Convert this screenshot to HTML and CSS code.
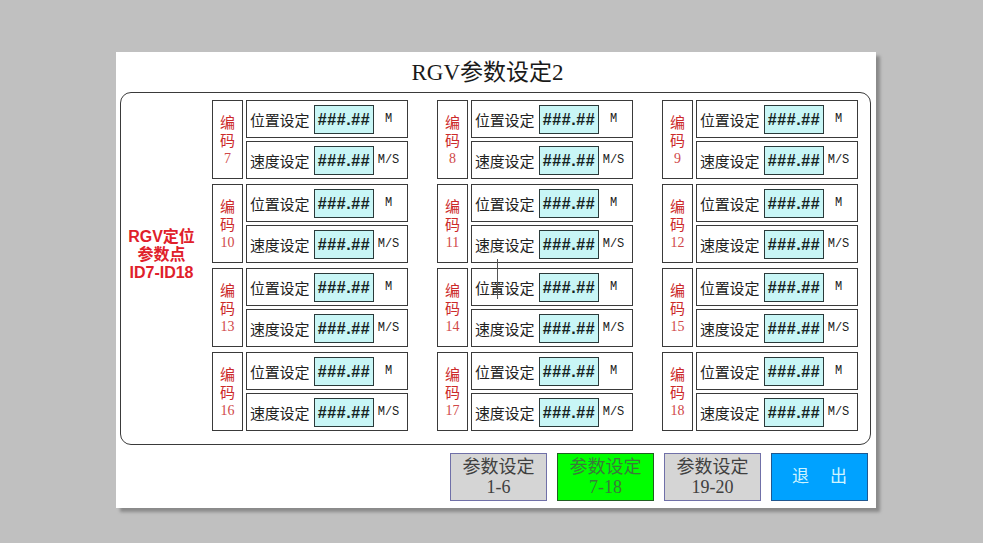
FILE: index.html
```html
<!DOCTYPE html>
<html lang="zh">
<head>
<meta charset="utf-8">
<title>RGV参数设定2</title>
<link rel="stylesheet" href="styles.css">
</head>
<body>
<div class="panel">
  <div class="title">RGV参数设定2</div>
  <div class="box">
    <div class="side">RGV定位<br>参数点<br>ID7-ID18</div>
    <div class="grid">
      <div class="group"><div class="code">编<br>码<br><span class="num">7</span></div><div class="rows"><div class="row"><span class="lbl">位置设定</span><span class="inp">###.##</span><span class="unit">M</span></div><div class="row"><span class="lbl">速度设定</span><span class="inp">###.##</span><span class="unit">M/S</span></div></div></div>
      <div class="group"><div class="code">编<br>码<br><span class="num">8</span></div><div class="rows"><div class="row"><span class="lbl">位置设定</span><span class="inp">###.##</span><span class="unit">M</span></div><div class="row"><span class="lbl">速度设定</span><span class="inp">###.##</span><span class="unit">M/S</span></div></div></div>
      <div class="group"><div class="code">编<br>码<br><span class="num">9</span></div><div class="rows"><div class="row"><span class="lbl">位置设定</span><span class="inp">###.##</span><span class="unit">M</span></div><div class="row"><span class="lbl">速度设定</span><span class="inp">###.##</span><span class="unit">M/S</span></div></div></div>
      <div class="group"><div class="code">编<br>码<br><span class="num">10</span></div><div class="rows"><div class="row"><span class="lbl">位置设定</span><span class="inp">###.##</span><span class="unit">M</span></div><div class="row"><span class="lbl">速度设定</span><span class="inp">###.##</span><span class="unit">M/S</span></div></div></div>
      <div class="group"><div class="code">编<br>码<br><span class="num">11</span></div><div class="rows"><div class="row"><span class="lbl">位置设定</span><span class="inp">###.##</span><span class="unit">M</span></div><div class="row"><span class="lbl">速度设定</span><span class="inp">###.##</span><span class="unit">M/S</span></div></div></div>
      <div class="group"><div class="code">编<br>码<br><span class="num">12</span></div><div class="rows"><div class="row"><span class="lbl">位置设定</span><span class="inp">###.##</span><span class="unit">M</span></div><div class="row"><span class="lbl">速度设定</span><span class="inp">###.##</span><span class="unit">M/S</span></div></div></div>
      <div class="group"><div class="code">编<br>码<br><span class="num">13</span></div><div class="rows"><div class="row"><span class="lbl">位置设定</span><span class="inp">###.##</span><span class="unit">M</span></div><div class="row"><span class="lbl">速度设定</span><span class="inp">###.##</span><span class="unit">M/S</span></div></div></div>
      <div class="group"><div class="code">编<br>码<br><span class="num">14</span></div><div class="rows"><div class="row"><span class="lbl">位置设定</span><span class="inp">###.##</span><span class="unit">M</span></div><div class="row"><span class="lbl">速度设定</span><span class="inp">###.##</span><span class="unit">M/S</span></div></div></div>
      <div class="group"><div class="code">编<br>码<br><span class="num">15</span></div><div class="rows"><div class="row"><span class="lbl">位置设定</span><span class="inp">###.##</span><span class="unit">M</span></div><div class="row"><span class="lbl">速度设定</span><span class="inp">###.##</span><span class="unit">M/S</span></div></div></div>
      <div class="group"><div class="code">编<br>码<br><span class="num">16</span></div><div class="rows"><div class="row"><span class="lbl">位置设定</span><span class="inp">###.##</span><span class="unit">M</span></div><div class="row"><span class="lbl">速度设定</span><span class="inp">###.##</span><span class="unit">M/S</span></div></div></div>
      <div class="group"><div class="code">编<br>码<br><span class="num">17</span></div><div class="rows"><div class="row"><span class="lbl">位置设定</span><span class="inp">###.##</span><span class="unit">M</span></div><div class="row"><span class="lbl">速度设定</span><span class="inp">###.##</span><span class="unit">M/S</span></div></div></div>
      <div class="group"><div class="code">编<br>码<br><span class="num">18</span></div><div class="rows"><div class="row"><span class="lbl">位置设定</span><span class="inp">###.##</span><span class="unit">M</span></div><div class="row"><span class="lbl">速度设定</span><span class="inp">###.##</span><span class="unit">M/S</span></div></div></div>
    </div>
    <div class="cursor"></div>
  </div>
  <div class="buttons">
    <div class="btn grey">参数设定<br>1-6</div>
    <div class="btn green">参数设定<br>7-18</div>
    <div class="btn grey">参数设定<br>19-20</div>
    <div class="btn blue">退<span class="sp"></span>出</div>
  </div>
</div>
</body>
</html>
```
FILE: styles.css
```css
html, body {
  margin: 0;
  padding: 0;
}
body {
  background: #c0c0c0;
  width: 983px;
  height: 543px;
  overflow: hidden;
  font-family: "Liberation Serif", "Noto Sans CJK SC", serif;
}
.panel {
  margin: 52px 0 0 116px;
  width: 760px;
  height: 456px;
  background: #ffffff;
  box-shadow: 4px 4px 3px #8a8a8a;
  display: flex;
  flex-direction: column;
}
.title {
  height: 40px;
  line-height: 42px;
  text-align: center;
  font-size: 23px;
  color: #1a1a1a;
  padding-right: 17px;
}
.box {
  position: relative;
  margin-left: 4px;
  width: 749px;
  height: 351px;
  border: 1px solid #3a3a3a;
  border-radius: 11px;
  display: flex;
}
.side {
  width: 91px;
  margin-top: 135px;
  text-align: center;
  color: #e0202a;
  font-family: "Liberation Sans", "Noto Sans CJK SC", sans-serif;
  font-weight: 700;
  font-size: 16px;
  line-height: 18px;
  padding-right: 10px;
  box-sizing: border-box;
}
.grid {
  margin-top: 7px;
  display: grid;
  grid-template-columns: repeat(3, 196px);
  grid-auto-rows: 79px;
  column-gap: 29px;
  row-gap: 5px;
}
.group {
  display: flex;
  gap: 3px;
}
.code {
  width: 29px;
  border: 1px solid #3a3a3a;
  display: flex;
  flex-direction: column;
  justify-content: center;
  align-items: center;
  text-align: center;
  color: #cc2a2a;
  font-family: "Liberation Serif", "Noto Sans CJK SC", serif;
  font-size: 15px;
  line-height: 17.5px;
  padding-top: 4px;
}
.code .num {
  font-size: 14px;
  color: #d04848;
}
.rows {
  flex: 1;
  display: flex;
  flex-direction: column;
  gap: 3px;
}
.row {
  flex: 1;
  border: 1px solid #3a3a3a;
  display: flex;
  align-items: center;
  padding-left: 3px;
}
.lbl {
  width: 64px;
  font-family: "Noto Sans CJK SC", sans-serif;
  font-size: 15px;
  color: #222;
  letter-spacing: -0.2px;
}
.inp {
  width: 58px;
  height: 27px;
  border: 1px solid #2a3a3a;
  background: #c8f6f6;
  font-family: "Liberation Sans", sans-serif;
  font-weight: 700;
  font-size: 16px;
  line-height: 27px;
  letter-spacing: 0.6px;
  text-align: center;
  color: #142222;
}
.unit {
  flex: 1;
  text-align: center;
  font-family: "Liberation Mono", monospace;
  font-size: 12px;
  color: #222;
  padding-right: 4px;
}
.cursor {
  position: absolute;
  left: 376px;
  top: 166px;
  width: 1px;
  height: 40px;
  background: #555;
}
.buttons {
  margin-top: 8px;
  margin-left: 334px;
  display: flex;
  gap: 10px;
}
.btn {
  width: 95px;
  height: 46px;
  display: flex;
  align-items: center;
  justify-content: center;
  text-align: center;
  font-size: 18px;
  line-height: 20px;
}
.grey {
  background: #d5d5d5;
  border: 1px solid #7070a8;
  color: #404040;
}
.green {
  background: #00ff00;
  border: 1px solid #206020;
  color: #3a7a3a;
}
.blue {
  background: #00a2ff;
  border: 1px solid #205890;
  color: #d0f4ff;
  font-size: 17px;
}
.sp {
  display: inline-block;
  width: 21px;
}
```
